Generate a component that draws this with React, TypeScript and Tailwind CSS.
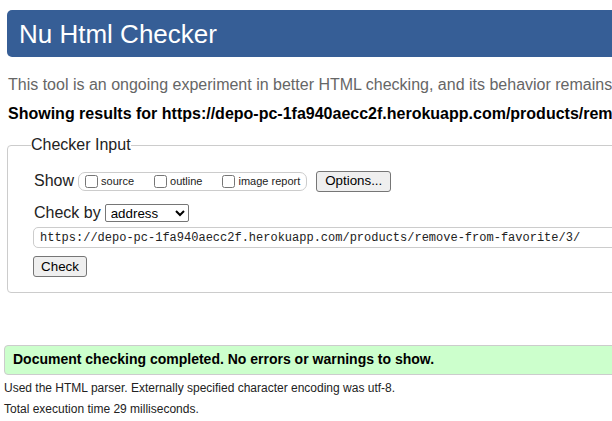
import React from "react";

export default function App() {
  const url = "https://depo-pc-1fa940aecc2f.herokuapp.com/products/remove-from-favorite/3/";
  return (
    <div className="w-[612px] h-[421px] overflow-hidden bg-white text-[#222] font-['Liberation_Sans',Arial,sans-serif]">
      <div className="w-[1100px]">
        <div className="mt-[10px] ml-[7px] h-[47px] bg-[#365e96] rounded-[5px] flex items-center pl-[12px]">
          <h1 className="text-white text-[26px] leading-none font-normal">Nu Html Checker</h1>
        </div>
        <p className="mt-[19px] ml-[8px] h-[18px] text-[16px] leading-[18px] text-[#666] whitespace-nowrap">
          This tool is an ongoing experiment in better HTML checking, and its behavior remains open to change
        </p>
        <p className="mt-[11px] ml-[8px] h-[18px] text-[16px] leading-[18px] font-bold text-black whitespace-nowrap">
          Showing results for {url}
        </p>
        <fieldset className="mt-[13px] ml-[7px] w-[800px] border border-[#ccc] rounded-[4px] px-[23px] pb-[14px]">
          <legend className="px-0 text-[16px] leading-[18px] text-[#222]">Checker Input</legend>
          <div className="pl-[3px]">
            <div className="mt-[17px] h-[20px] flex items-center">
              <span className="text-[16px] leading-[18px] mr-[4px]">Show</span>
              <div className="h-[19px] flex items-center border border-[#ccc] rounded-[7px] pl-[6px] pr-[6px]">
                <input type="checkbox" className="m-0 w-[13px] h-[13px]" />
                <span className="ml-[3px] text-[11px] leading-[13px] mr-[20px]">source</span>
                <input type="checkbox" className="m-0 w-[13px] h-[13px]" />
                <span className="ml-[3px] text-[11px] leading-[13px] mr-[20px]">outline</span>
                <input type="checkbox" className="m-0 w-[13px] h-[13px]" />
                <span className="ml-[3px] text-[11px] leading-[13px]">image report</span>
              </div>
              <button className="ml-[9px] h-[21px] w-[75px] border border-[#767676] rounded-[3px] bg-[#efefef] text-[13.33px] leading-none text-black">
                Options...
              </button>
            </div>
            <div className="mt-[12px] h-[20px] flex items-center">
              <span className="text-[16px] leading-[18px] mr-[4px]">Check by</span>
              <select className="h-[18px] w-[84px] border border-[#767676] rounded-[2px] text-[13.33px] leading-none text-black pl-[1px]">
                <option>address</option>
              </select>
            </div>
            <div className="mt-[4px] ml-[-1px] h-[21px] border border-[#ccc] rounded-[5px] flex items-center pl-[6px]">
              <span className="font-['Liberation_Mono','DejaVu_Sans_Mono',monospace] text-[12px] leading-none text-[#222] whitespace-nowrap">{url}</span>
            </div>
            <button className="mt-[8px] ml-[-1px] h-[21px] w-[54px] border border-[#767676] rounded-[3px] bg-[#efefef] text-[13.33px] leading-none text-black">
              Check
            </button>
          </div>
        </fieldset>
        <div className="mt-[52px] ml-[4px] h-[30px] bg-[#ccffcc] border border-[#ccc] rounded-[4px] flex items-center pl-[8px]">
          <span className="text-[14px] font-bold text-black whitespace-nowrap">
            Document checking completed. No errors or warnings to show.
          </span>
        </div>
        <p className="mt-[6px] ml-[4px] h-[14px] text-[12px] leading-[14px] text-[#222] whitespace-nowrap">
          Used the HTML parser. Externally specified character encoding was utf-8.
        </p>
        <p className="mt-[7px] ml-[4px] h-[14px] text-[12px] leading-[14px] text-[#222] whitespace-nowrap">
          Total execution time 29 milliseconds.
        </p>
      </div>
    </div>
  );
}
